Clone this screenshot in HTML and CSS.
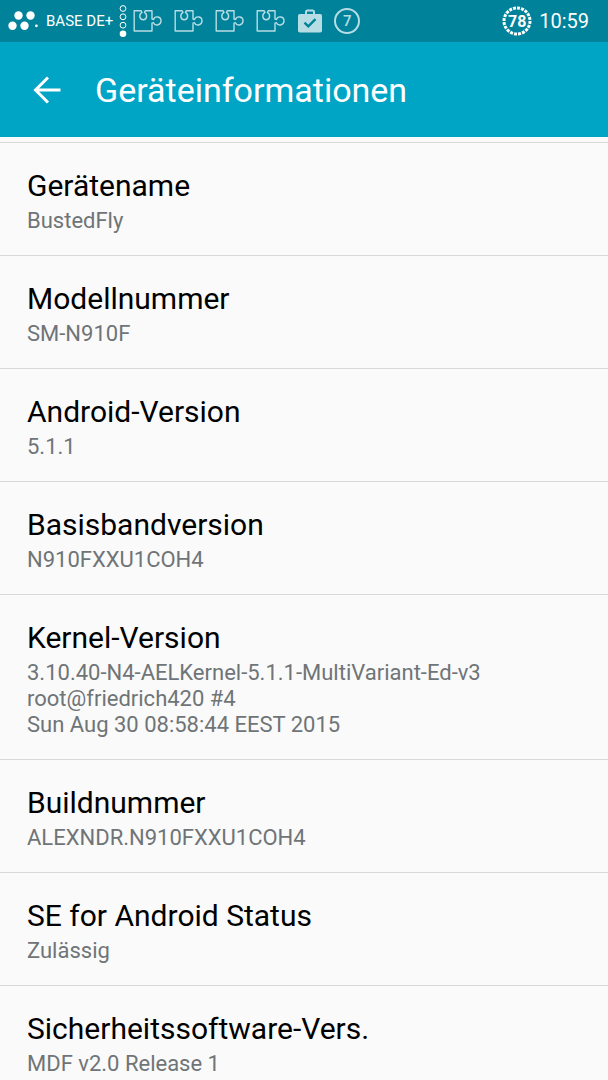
FILE: index.html
```html
<!DOCTYPE html>
<html lang="de">
<head>
<meta charset="utf-8">
<meta name="viewport" content="width=device-width, initial-scale=1">
<title>Geräteinformationen</title>
<link rel="stylesheet" href="styles.css">
</head>
<body>
<svg class="defs" aria-hidden="true">
  <symbol id="puzzle" viewBox="0 0 30 24">
    <path d="M1.2 1.7H8L9 3.3C5.8 5 6 10.6 10.200 10.800C14.400 10.600 14.600 5 11.400 3.300L12.400 1.700H19V10L20.500 10.500C22 6.300 28.200 7.500 28 12C27.800 16.500 22 17.500 20.500 13.700L19 14.200V22H1.200Z" fill="none" stroke="currentColor" stroke-width="1.400" stroke-linejoin="round"/>
  </symbol>
</svg>
<div class="status">
  <svg class="dots" viewBox="0 0 30 22" aria-hidden="true">
    <g fill="currentColor"><circle cx="10.500" cy="5.500" r="4.200"/><circle cx="22.500" cy="5.500" r="4.200"/><circle cx="4.500" cy="15.800" r="4.200"/><circle cx="16.500" cy="15.800" r="4.200"/><circle cx="28.400" cy="15.800" r="1.400"/></g>
  </svg>
  <span class="carrier">BASE DE+</span>
  <svg class="signal" viewBox="0 0 8 34" aria-hidden="true">
    <g fill="none" stroke="currentColor" stroke-width="1"><circle cx="4" cy="4.500" r="2.900"/><circle cx="4" cy="12.800" r="2.900"/><circle cx="4" cy="21.200" r="2.900"/></g><circle cx="4" cy="29.800" r="3.300" fill="currentColor"/>
  </svg>
  <div class="notes">
    <svg class="piece" aria-hidden="true"><use href="#puzzle"/></svg>
    <svg class="piece" aria-hidden="true"><use href="#puzzle"/></svg>
    <svg class="piece" aria-hidden="true"><use href="#puzzle"/></svg>
    <svg class="piece" aria-hidden="true"><use href="#puzzle"/></svg>
    <svg class="case" viewBox="0 0 26 24" aria-hidden="true">
      <path d="M9 6V3Q9 1.500 10.500 1.500H15.500Q17 1.500 17 3V6" fill="none" stroke="currentColor" stroke-width="2"/>
      <rect x="1" y="5" width="24" height="18.500" rx="1.800" fill="currentColor"/>
      <path class="check" d="M7.500 13.700L11.300 17.300L18.500 10.200" fill="none" stroke-width="2.400"/>
    </svg>
    <span class="count">7</span>
  </div>
  <div class="battery">
    <svg class="ring" viewBox="0 0 30 30" aria-hidden="true"><circle cx="15" cy="15" r="13" fill="none" stroke="currentColor" stroke-width="3" pathLength="100" stroke-dasharray="3.700 1.300"/></svg>
    <span class="level">78</span>
  </div>
  <time class="clock">10:59</time>
</div>
<header class="bar">
  <button class="back" type="button" aria-label="Zurück">
    <svg class="arrow" viewBox="0 0 28 28" aria-hidden="true"><path d="M15 1.500L2.500 14L15 26.500M2.500 14H27.500" fill="none" stroke="currentColor" stroke-width="3"/></svg>
  </button>
  <h1 class="heading">Geräteinformationen</h1>
</header>
<main>
  <dl class="list">
    <div class="item"><dt class="name">Gerätename</dt><dd class="value">BustedFly</dd></div>
    <div class="item"><dt class="name">Modellnummer</dt><dd class="value">SM-N910F</dd></div>
    <div class="item"><dt class="name">Android-Version</dt><dd class="value">5.1.1</dd></div>
    <div class="item"><dt class="name">Basisbandversion</dt><dd class="value">N910FXXU1COH4</dd></div>
    <div class="item"><dt class="name">Kernel-Version</dt><dd class="value">3.10.40-N4-AELKernel-5.1.1-MultiVariant-Ed-v3<br>root@friedrich420 #4<br>Sun Aug 30 08:58:44 EEST 2015</dd></div>
    <div class="item"><dt class="name">Buildnummer</dt><dd class="value">ALEXNDR.N910FXXU1COH4</dd></div>
    <div class="item"><dt class="name">SE for Android Status</dt><dd class="value">Zulässig</dd></div>
    <div class="item"><dt class="name">Sicherheitssoftware-Vers.</dt><dd class="value">MDF v2.0 Release 1</dd></div>
  </dl>
</main>
</body>
</html>
```
FILE: styles.css
```css
* { box-sizing: border-box; }
html { scrollbar-width: none; }
body {
  margin: 0;
  height: 100vh;
  display: flex;
  flex-direction: column;
  overflow: hidden;
  background: #fafafa;
  color: #000;
  font-family: Roboto, "Noto Sans", sans-serif;
}
.defs { position: absolute; width: 0; height: 0; }
.status {
  flex: none;
  display: flex;
  align-items: center;
  height: 42px;
  padding: 0 19px 0 8px;
  background: #00829b;
  color: #fff;
}
.dots { flex: none; width: 30px; height: 22px; }
.carrier { margin-left: 8px; font-size: 15px; white-space: nowrap; }
.signal { flex: none; width: 8px; height: 34px; margin-left: 6px; }
.notes {
  display: flex;
  align-items: center;
  gap: 11px;
  margin-left: 6px;
  color: #b7dde4;
}
.piece { width: 30px; height: 24px; }
.case { width: 26px; height: 24px; }
.check { stroke: #00829b; }
.count {
  display: grid;
  place-items: center;
  width: 26px;
  height: 26px;
  border: 2px solid;
  border-radius: 50%;
  font-size: 15px;
  font-weight: 500;
}
.battery { display: grid; place-items: center; margin-left: auto; }
.ring, .level { grid-area: 1 / 1; }
.ring { width: 30px; height: 30px; }
.level { font-size: 16px; font-weight: 700; }
.clock { margin-left: 7px; font-size: 20px; }
.bar {
  flex: none;
  display: flex;
  align-items: center;
  height: 95px;
  padding: 0 26px;
  background: #00a5c5;
  color: #fff;
}
.back {
  display: grid;
  place-items: center;
  width: 42px;
  height: 48px;
  padding: 0;
  border: 0;
  background: none;
  color: inherit;
}
.arrow { width: 28px; height: 28px; }
.heading { margin: 0 0 0 27px; font-size: 34px; line-height: 40px; font-weight: 400; }
.list { margin: 5px 0 0; }
.item { padding: 25px 27px 21px; border-top: 1px solid #d9d9d9; }
.name { font-size: 30px; line-height: 36px; }
.value { margin: 4px 0 0; color: #6f7477; font-size: 22px; line-height: 26px; }
```
